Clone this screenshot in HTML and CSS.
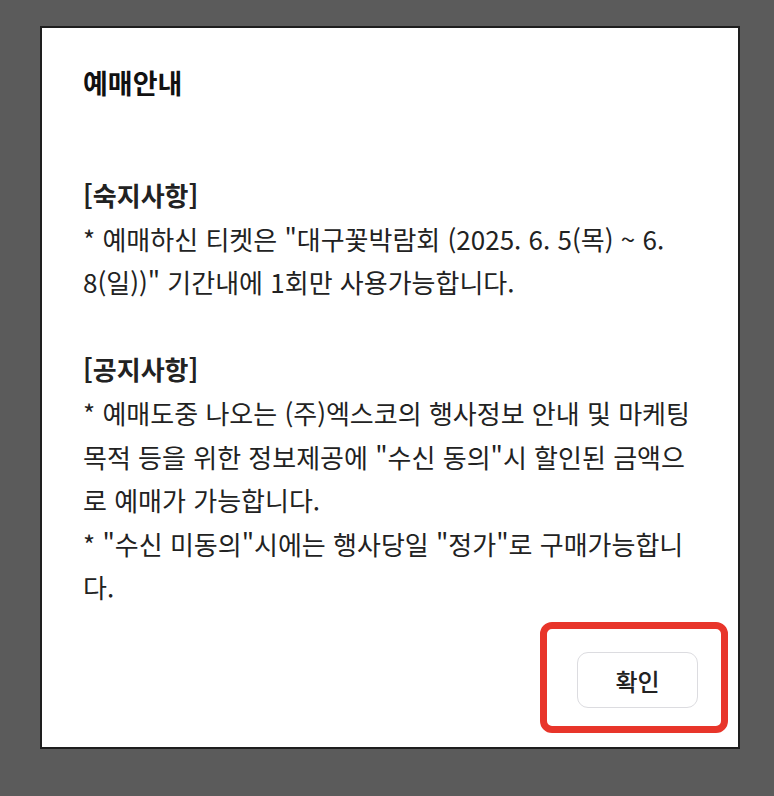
FILE: index.html
```html
<!DOCTYPE html>
<html lang="ko">
<head>
<meta charset="utf-8">
<title>예매안내</title>
<link rel="stylesheet" href="styles.css">
</head>
<body>
<div class="dialog">
  <h2 class="title">예매안내</h2>
  <div class="content">
    <p class="heading">[숙지사항]</p>
    <p>* 예매하신 티켓은 "대구꽃박람회 (2025. 6. 5(목) ~ 6. 8(일))" 기간내에 1회만 사용가능합니다.</p>
    <p class="blank">&nbsp;</p>
    <p class="heading">[공지사항]</p>
    <p>* 예매도중 나오는 (주)엑스코의 행사정보 안내 및 마케팅 목적 등을 위한 정보제공에 "수신 동의"시 할인된 금액으로 예매가 가능합니다.</p>
    <p>* "수신 미동의"시에는 행사당일 "정가"로 구매가능합니다.</p>
  </div>
  <div class="footer">
    <div class="btn-wrap">
      <button class="btn" type="button">확인</button>
      <span class="highlight"></span>
    </div>
  </div>
</div>
</body>
</html>
```
FILE: styles.css
```css
html, body {
  margin: 0;
  padding: 0;
}
body {
  background: #5b5b5b;
  width: 774px;
  height: 796px;
  overflow: hidden;
  font-family: "Noto Sans CJK KR", "Noto Sans", sans-serif;
  color: #222;
}
.dialog {
  box-sizing: border-box;
  margin: 26px 0 0 40px;
  width: 700px;
  height: 723px;
  background: #fff;
  border: 2px solid #1e1e1e;
  padding: 33px 40px 39px 41px;
  display: flex;
  flex-direction: column;
}
.title {
  margin: 0;
  font-size: 27px;
  font-weight: 700;
  line-height: 44px;
  color: #111;
}
.content {
  margin-top: 68px;
  font-size: 26px;
  line-height: 43.6px;
  color: #222;
  word-break: normal;
}
.content p {
  margin: 0;
}
.content .heading {
  font-weight: 700;
}
.footer {
  margin-top: auto;
  display: flex;
  justify-content: flex-end;
}
.btn-wrap {
  position: relative;
}
.btn {
  display: block;
  box-sizing: border-box;
  width: 121px;
  height: 56px;
  background: #fff;
  border: 1.5px solid #dcdce0;
  border-radius: 11px;
  font-family: "Noto Sans CJK KR", "Noto Sans", sans-serif;
  font-size: 24px;
  font-weight: 500;
  color: #222;
  padding: 0;
}
.highlight {
  position: absolute;
  left: -37px;
  top: -30px;
  width: 188px;
  height: 111px;
  box-sizing: border-box;
  border: 7px solid #e8352a;
  border-radius: 12px;
  pointer-events: none;
}
```
